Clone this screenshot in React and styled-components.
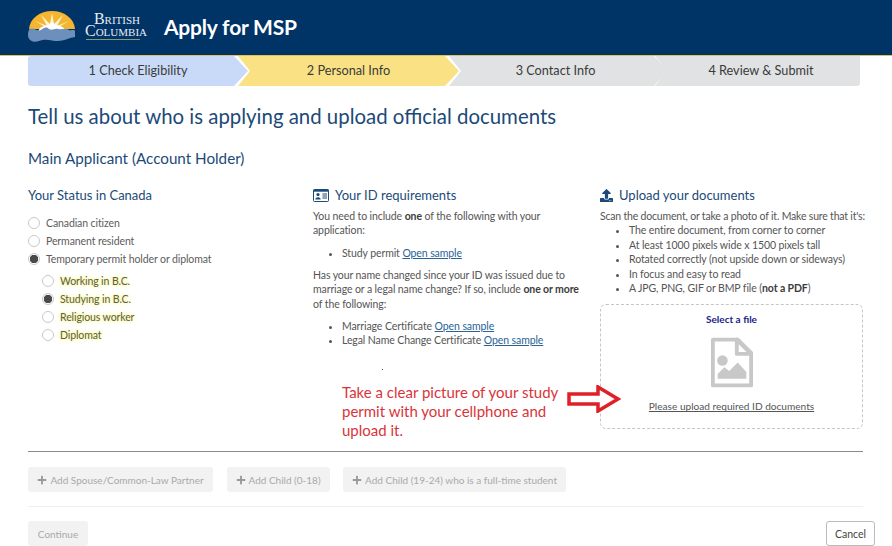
import styled, { createGlobalStyle } from 'styled-components';
import { FaPlus, FaUpload } from 'react-icons/fa';

const GlobalStyle = createGlobalStyle`
	html, body {
		margin: 0;
		padding: 0;
		background: #fff;
	}
	body {
		font-family: Lato, 'Open Sans', sans-serif;
		color: #555;
		overflow: hidden;
	}
	* {
		box-sizing: border-box;
	}
`;

const steps = [
	{ label: '1 Check Eligibility', bg: '#c8daf8', width: 220, overlap: 0, pad: '0' },
	{ label: '2 Personal Info', bg: '#fae284', width: 221, overlap: 10, pad: '0' },
	{ label: '3 Contact Info', bg: '#e1e2e3', width: 219, overlap: 10, pad: '0 6px 0 0' },
	{ label: '4 Review & Submit', bg: '#e1e2e3', width: 205, overlap: 13, pad: '0 0 0 7px' },
];

function Logo() {
	return (
		<LogoMark viewBox="0 0 48 32" width="48" height="32">
			<path d="M1 19 C2 8 12 1 24 1 C36 1 46 8 47 19 Z" fill="#f4b531" />
			<path d="M24 21 L7 11 L19 16 L13 5 L22 14 L24 3 L26 14 L35 5 L29 16 L41 11 Z" fill="#fff4cf" />
			<path d="M10 21 C14 14 19 17 24 12 C29 17 34 14 38 21 Z" fill="#fff" />
			<path d="M0 25 C0 22 1 19 2 19 C6 17 9 22 13 20 C16 18 18 16 21 19 C24 21 27 18 30 19 C34 20 38 17 41 20 C44 21 46 19 47 21 L47 27 C40 28 36 31 30 31 C24 31 18 28 11 31 C6 33 0 31 0 25 Z" fill="#6d8fbb" />
		</LogoMark>
	);
}

function IdIcon() {
	return (
		<svg viewBox="0 0 16 13" width="16" height="13">
			<rect x="0.5" y="0.5" width="15" height="12" rx="1" fill="#fff" stroke="#1c4a78" />
			<rect x="0.5" y="0.5" width="15" height="2.2" fill="#1c4a78" />
			<circle cx="5" cy="5.6" r="1.6" fill="#1c4a78" />
			<path d="M2.3 10.4 C2.3 7.6 7.7 7.6 7.7 10.4 Z" fill="#1c4a78" />
			<path d="M9.4 5 H14 M9.4 7 H14 M9.4 9 H14" stroke="#1c4a78" />
		</svg>
	);
}

function FileImage() {
	return (
		<svg viewBox="0 0 46 52" width="44" height="51">
			<path d="M3 2 H29 L43 16 V50 H3 Z" fill="#fff" stroke="#c8c8c8" strokeWidth="4" strokeLinejoin="round" />
			<path d="M28 2 V17 H43 Z" fill="#fff" stroke="#c8c8c8" strokeWidth="4" strokeLinejoin="round" />
			<circle cx="13" cy="24" r="5.5" fill="#c8c8c8" />
			<path d="M8 43 V38 L15 31 L20 35 L29 26 L38 36 V43 Z" fill="#c8c8c8" />
		</svg>
	);
}

function App() {
	return (
		<Page>
			<GlobalStyle />
			<Header>
				<Logo />
				<Wordmark>
					<span>British</span>
					<span>Columbia</span>
				</Wordmark>
				<AppTitle>Apply for MSP</AppTitle>
			</Header>

			<Main>
				<Stepper>
					{steps.map((step, i) => (
						<Step
							key={step.label}
							$bg={step.bg}
							$width={step.width}
							$overlap={step.overlap}
							$pad={step.pad}
							$first={i === 0}
							$last={i === steps.length - 1}
						>
							{step.label}
						</Step>
					))}
				</Stepper>

				<PageTitle>Tell us about who is applying and upload official documents</PageTitle>
				<SubTitle>Main Applicant (Account Holder)</SubTitle>

				<Columns>
					<div>
						<ColumnTitle>Your Status in Canada</ColumnTitle>
						<RadioGroup>
							<RadioRow><Radio />Canadian citizen</RadioRow>
							<RadioRow><Radio />Permanent resident</RadioRow>
							<RadioRow><Radio $checked />Temporary permit holder or diplomat</RadioRow>
						</RadioGroup>
						<NestedGroup>
							<RadioRow $glow><Radio />Working in B.C.</RadioRow>
							<RadioRow $glow><Radio $checked />Studying in B.C.</RadioRow>
							<RadioRow $glow><Radio />Religious worker</RadioRow>
							<RadioRow $glow><Radio />Diplomat</RadioRow>
						</NestedGroup>
					</div>

					<MiddleColumn>
						<ColumnTitle $icon>
							<IdIcon />
							Your ID requirements
						</ColumnTitle>
						<Text>
							You need to include <b>one</b> of the following with your application:
						</Text>
						<Bullets>
							<li>Study permit <a href="#sample">Open sample</a></li>
						</Bullets>
						<Text>
							Has your name changed since your ID was issued due to marriage or a legal name change? If so, include <b>one or more</b> of the following:
						</Text>
						<Bullets>
							<li>Marriage Certificate <a href="#sample">Open sample</a></li>
							<li>Legal Name Change Certificate <a href="#sample">Open sample</a></li>
						</Bullets>
						<Speck />
						<Note>Take a clear picture of your study permit with your cellphone and upload it.</Note>
						<NoteArrow viewBox="0 0 54 28" width="54" height="28">
							<path d="M2 9 H31 V2 L51 14 L31 26 V19 H2 Z" fill="#fff" stroke="#e02027" strokeWidth="3.5" />
						</NoteArrow>
					</MiddleColumn>

					<div>
						<ColumnTitle $icon>
							<FaUpload size={13} color="#1c4a78" />
							Upload your documents
						</ColumnTitle>
						<Text $tight>Scan the document, or take a photo of it. Make sure that it's:</Text>
						<Bullets $tight>
							<li>The entire document, from corner to corner</li>
							<li>At least 1000 pixels wide x 1500 pixels tall</li>
							<li>Rotated correctly (not upside down or sideways)</li>
							<li>In focus and easy to read</li>
							<li>A JPG, PNG, GIF or BMP file (<b>not a PDF</b>)</li>
						</Bullets>
						<DropZone>
							<SelectFile>Select a file</SelectFile>
							<FileImage />
							<UploadHint>Please upload required ID documents</UploadHint>
						</DropZone>
					</div>
				</Columns>

				<HeavyRule />
				<AddRow>
					<GhostButton $wide={185}><FaPlus size={10} />Add Spouse/Common-Law Partner</GhostButton>
					<GhostButton $wide={103}><FaPlus size={10} />Add Child (0-18)</GhostButton>
					<GhostButton $wide={222}><FaPlus size={10} />Add Child (19-24) who is a full-time student</GhostButton>
				</AddRow>
				<LightRule />
				<Footer>
					<GhostButton $wide={60}>Continue</GhostButton>
					<CancelButton>Cancel</CancelButton>
				</Footer>
			</Main>
		</Page>
	);
}

export default App;

const Page = styled.div`
	width: 892px;
	height: 546px;
	overflow: hidden;
`;

const Header = styled.header`
	height: 56px;
	background: #003366;
	border-bottom: 1.5px solid #e3bf5c;
	display: flex;
	align-items: center;
	padding: 0 0 3px 28px;
`;

const LogoMark = styled.svg`
	flex: none;
`;

const Wordmark = styled.div`
	display: flex;
	flex-direction: column;
	align-items: flex-end;
	width: 70px;
	margin-left: 1px;
	font-family: 'Liberation Serif', serif;
	font-variant: small-caps;
	font-size: 16px;
	line-height: 12px;
	color: #e6ebf2;
	position: relative;
	padding-bottom: 2px;

	span:first-child {
		margin-right: 7px;
	}

	&::after {
		content: '';
		position: absolute;
		left: 9px;
		right: 7px;
		bottom: -1px;
		height: 1px;
		background: #8a9a78;
	}
`;

const AppTitle = styled.h1`
	margin: 0 0 0 17px;
	font-size: 21px;
	font-weight: 700;
	letter-spacing: -0.2px;
	color: #fff;
`;

const Main = styled.main`
	padding: 0 17px 0 28px;
`;

const Stepper = styled.div`
	display: flex;
	width: 832px;
	height: 30px;
`;

const Step = styled.div`
	flex: none;
	width: ${(p) => p.$width}px;
	margin-left: ${(p) => -p.$overlap}px;
	display: flex;
	align-items: center;
	justify-content: center;
	padding: ${(p) => p.$pad};
	padding-bottom: 2px;
	background: ${(p) => p.$bg};
	font-size: 12.7px;
	color: #3a3a3a;
	border-radius: ${(p) => (p.$first ? '3px 0 0 3px' : p.$last ? '0 0 3px 0' : 0)};
	clip-path: polygon(
		0 0,
		${(p) => (p.$last ? '100% 0, 100% 100%' : 'calc(100% - 14px) 0, 100% 50%, calc(100% - 14px) 100%')},
		0 100%
		${(p) => (p.$first ? '' : ', 12px 50%')}
	);
`;

const PageTitle = styled.h2`
	margin: 18px 0 0;
	font-size: 20.4px;
	line-height: 24px;
	font-weight: 400;
	color: #1c4a78;
`;

const SubTitle = styled.h3`
	margin: 21px 0 0;
	font-size: 15.2px;
	line-height: 18px;
	font-weight: 400;
	color: #1c4a78;
`;

const Columns = styled.div`
	display: grid;
	grid-template-columns: 285px 287px 263px;
	margin-top: 19px;
	height: 265px;
`;

const MiddleColumn = styled.div`
	position: relative;
	padding-right: 20px;
`;

const ColumnTitle = styled.h4`
	margin: 0 0 ${(p) => (p.$icon ? 5 : 10)}px;
	display: flex;
	align-items: center;
	gap: 6px;
	font-size: 13px;
	line-height: 18px;
	font-weight: 400;
	color: #1c4a78;
`;

const RadioGroup = styled.div`
	display: flex;
	flex-direction: column;
`;

const NestedGroup = styled(RadioGroup)`
	margin: 4px 0 0 14px;
`;

const RadioRow = styled.label`
	display: flex;
	align-items: center;
	gap: 6px;
	height: 18px;
	font-size: 10.5px;
	letter-spacing: -0.1px;
	color: #5c5c5c;
	text-shadow: ${(p) => (p.$glow ? '0 0 3px #f4f45c, 0 0 5px #f8f88a' : 'none')};
`;

const Radio = styled.span`
	flex: none;
	width: 12px;
	height: 12px;
	border-radius: 50%;
	border: 1px solid #c9c9c9;
	background: ${(p) => (p.$checked ? 'radial-gradient(circle, #4a4a4a 0 4px, #fff 4.5px)' : '#fff')};
`;

const Text = styled.p`
	margin: 0 0 ${(p) => (p.$tight ? 0 : 8)}px;
	font-size: 10.5px;
	letter-spacing: ${(p) => (p.$tight ? -0.19 : -0.1)}px;
	line-height: 14.4px;
	color: #555;
	white-space: ${(p) => (p.$tight ? 'nowrap' : 'normal')};

	b {
		font-weight: 700;
		color: #3c3c3c;
	}
`;

const Bullets = styled.ul`
	margin: 0 0 ${(p) => (p.$tight ? 0 : 8)}px;
	padding: 0 0 0 29px;
	font-size: 10.5px;
	letter-spacing: -0.1px;
	line-height: ${(p) => (p.$tight ? 14.4 : 14)}px;
	color: #555;

	b {
		font-weight: 700;
		color: #3c3c3c;
	}

	a {
		color: #2a6496;
	}
`;

const Speck = styled.div`
	width: 1px;
	height: 1px;
	margin: 22px 0 0 69px;
	background: #555;
`;

const Note = styled.p`
	margin: 13px 0 0 29px;
	width: 225px;
	font-size: 15px;
	line-height: 19px;
	color: #d9343a;
`;

const NoteArrow = styled.svg`
	position: absolute;
	left: 254px;
	top: 199px;
`;

const DropZone = styled.div`
	margin-top: 9px;
	width: 263px;
	height: 125px;
	border: 1.5px dashed #c6c6c6;
	border-radius: 6px;
	display: flex;
	flex-direction: column;
	align-items: center;
	padding-top: 7px;
`;

const SelectFile = styled.div`
	margin-bottom: 11px;
	font-size: 10px;
	line-height: 14px;
	font-weight: 700;
	color: #22228a;
`;

const UploadHint = styled.div`
	margin-top: 11px;
	font-size: 10.1px;
	line-height: 14px;
	color: #555;
	text-decoration: underline;
`;

const HeavyRule = styled.hr`
	margin: 0;
	width: 835px;
	border: 0;
	border-top: 1px solid #8a8a8a;
`;

const LightRule = styled.hr`
	margin: 14px 0;
	width: 835px;
	border: 0;
	border-top: 1px solid #eee;
`;

const AddRow = styled.div`
	display: flex;
	gap: 13.5px;
	margin-top: 15px;
`;

const GhostButton = styled.button`
	display: flex;
	align-items: center;
	justify-content: center;
	gap: 3px;
	height: 25px;
	min-width: ${(p) => (p.$wide ? `${p.$wide}px` : 'auto')};
	padding: 0 9px;
	border: 0;
	border-radius: 3px;
	background: #f2f2f2;
	font-family: inherit;
	font-size: 10px;
	color: #a9a9a9;

	svg {
		color: #999;
	}
`;

const Footer = styled.div`
	display: flex;
	justify-content: space-between;
`;

const CancelButton = styled.button`
	height: 25px;
	width: 49px;
	padding: 0;
	border: 1px solid #bbb;
	border-radius: 3px;
	background: #fff;
	font-family: inherit;
	font-size: 10.5px;
	color: #444;
`;
